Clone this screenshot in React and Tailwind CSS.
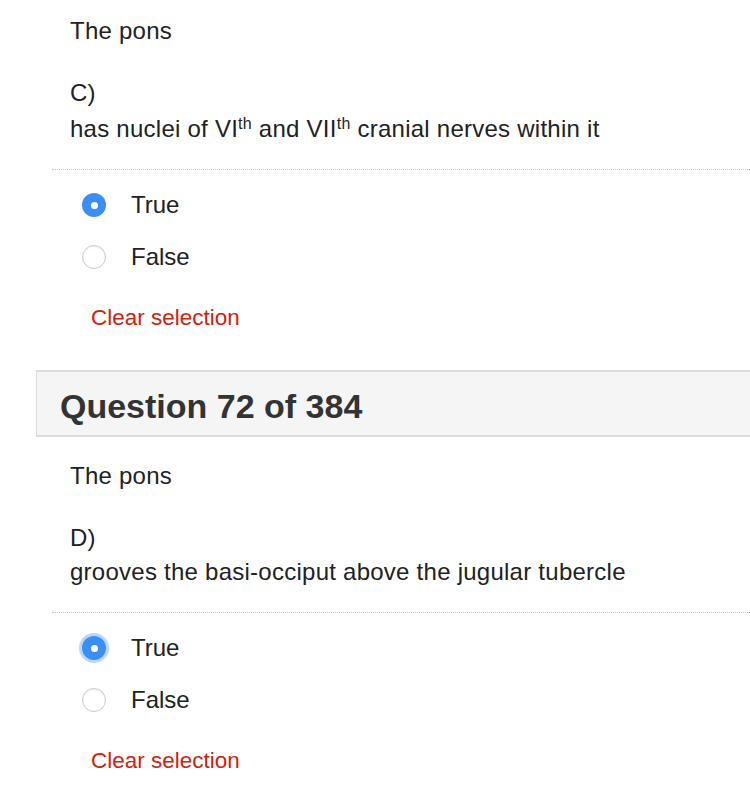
import React from 'react';

function Radio({ checked, focused }) {
    if (checked) {
        return (
            <span
                className={
                    'w-[24px] h-[24px] rounded-full bg-[#3b8ef2] flex items-center justify-center shrink-0 ' +
                    (focused ? 'shadow-[0_0_0_3px_rgba(59,142,242,0.35)]' : '')
                }
            >
                <span className="w-[7px] h-[7px] rounded-full bg-white" />
            </span>
        );
    }
    return <span className="w-[24px] h-[24px] rounded-full border border-[#c9c9c9] bg-white shrink-0 shadow-[inset_0_1px_2px_rgba(0,0,0,0.06)]" />;
}

function Answers({ focused }) {
    return (
        <div>
            <div className="ml-[16px] border-t border-dotted border-[#c8c8c8]" />
            <div className="pl-[46px] pt-[9px]">
                <div className="h-[52px] flex items-center gap-[25px]">
                    <Radio checked focused={focused} />
                    <span>True</span>
                </div>
                <div className="h-[52px] flex items-center gap-[25px]">
                    <Radio />
                    <span>False</span>
                </div>
            </div>
            <div className="pl-[55px] mt-[18px] text-[22.5px] text-[#d4200c]">Clear selection</div>
        </div>
    );
}

export default function App() {
    return (
        <div className="w-[750px] h-[788px] overflow-hidden bg-white pl-[36px] text-[24px] leading-[34px] text-[#222] font-['Liberation_Sans',Arial,sans-serif]">
            {/* vorige vraag */}
            <div className="pl-[34px] pt-[14px] tracking-[0.25px]">
                <p>The pons</p>
                <p className="mt-[28px]">C)</p>
                <p className="mt-[2px] mb-[23px]">
                    has nuclei of VI<sup className="text-[16px]">th</sup> and VII<sup className="text-[16px]">th</sup> cranial nerves within it
                </p>
            </div>
            <Answers />

            {/* vraag 72 */}
            <div className="mt-[35px] h-[67px] w-[740px] bg-[#f5f5f5] border-y-2 border-l border-[#dcdcdc] flex items-center pl-[23px]">
                <h2 className="text-[34px] font-bold text-[#333] leading-none pt-[5px]">Question 72 of 384</h2>
            </div>
            <div className="pl-[34px] pt-[22px] tracking-[0.25px]">
                <p>The pons</p>
                <p className="mt-[28px]">D)</p>
                <p className="mb-[23px]">grooves the basi-occiput above the jugular tubercle</p>
            </div>
            <Answers focused />
        </div>
    );
}
